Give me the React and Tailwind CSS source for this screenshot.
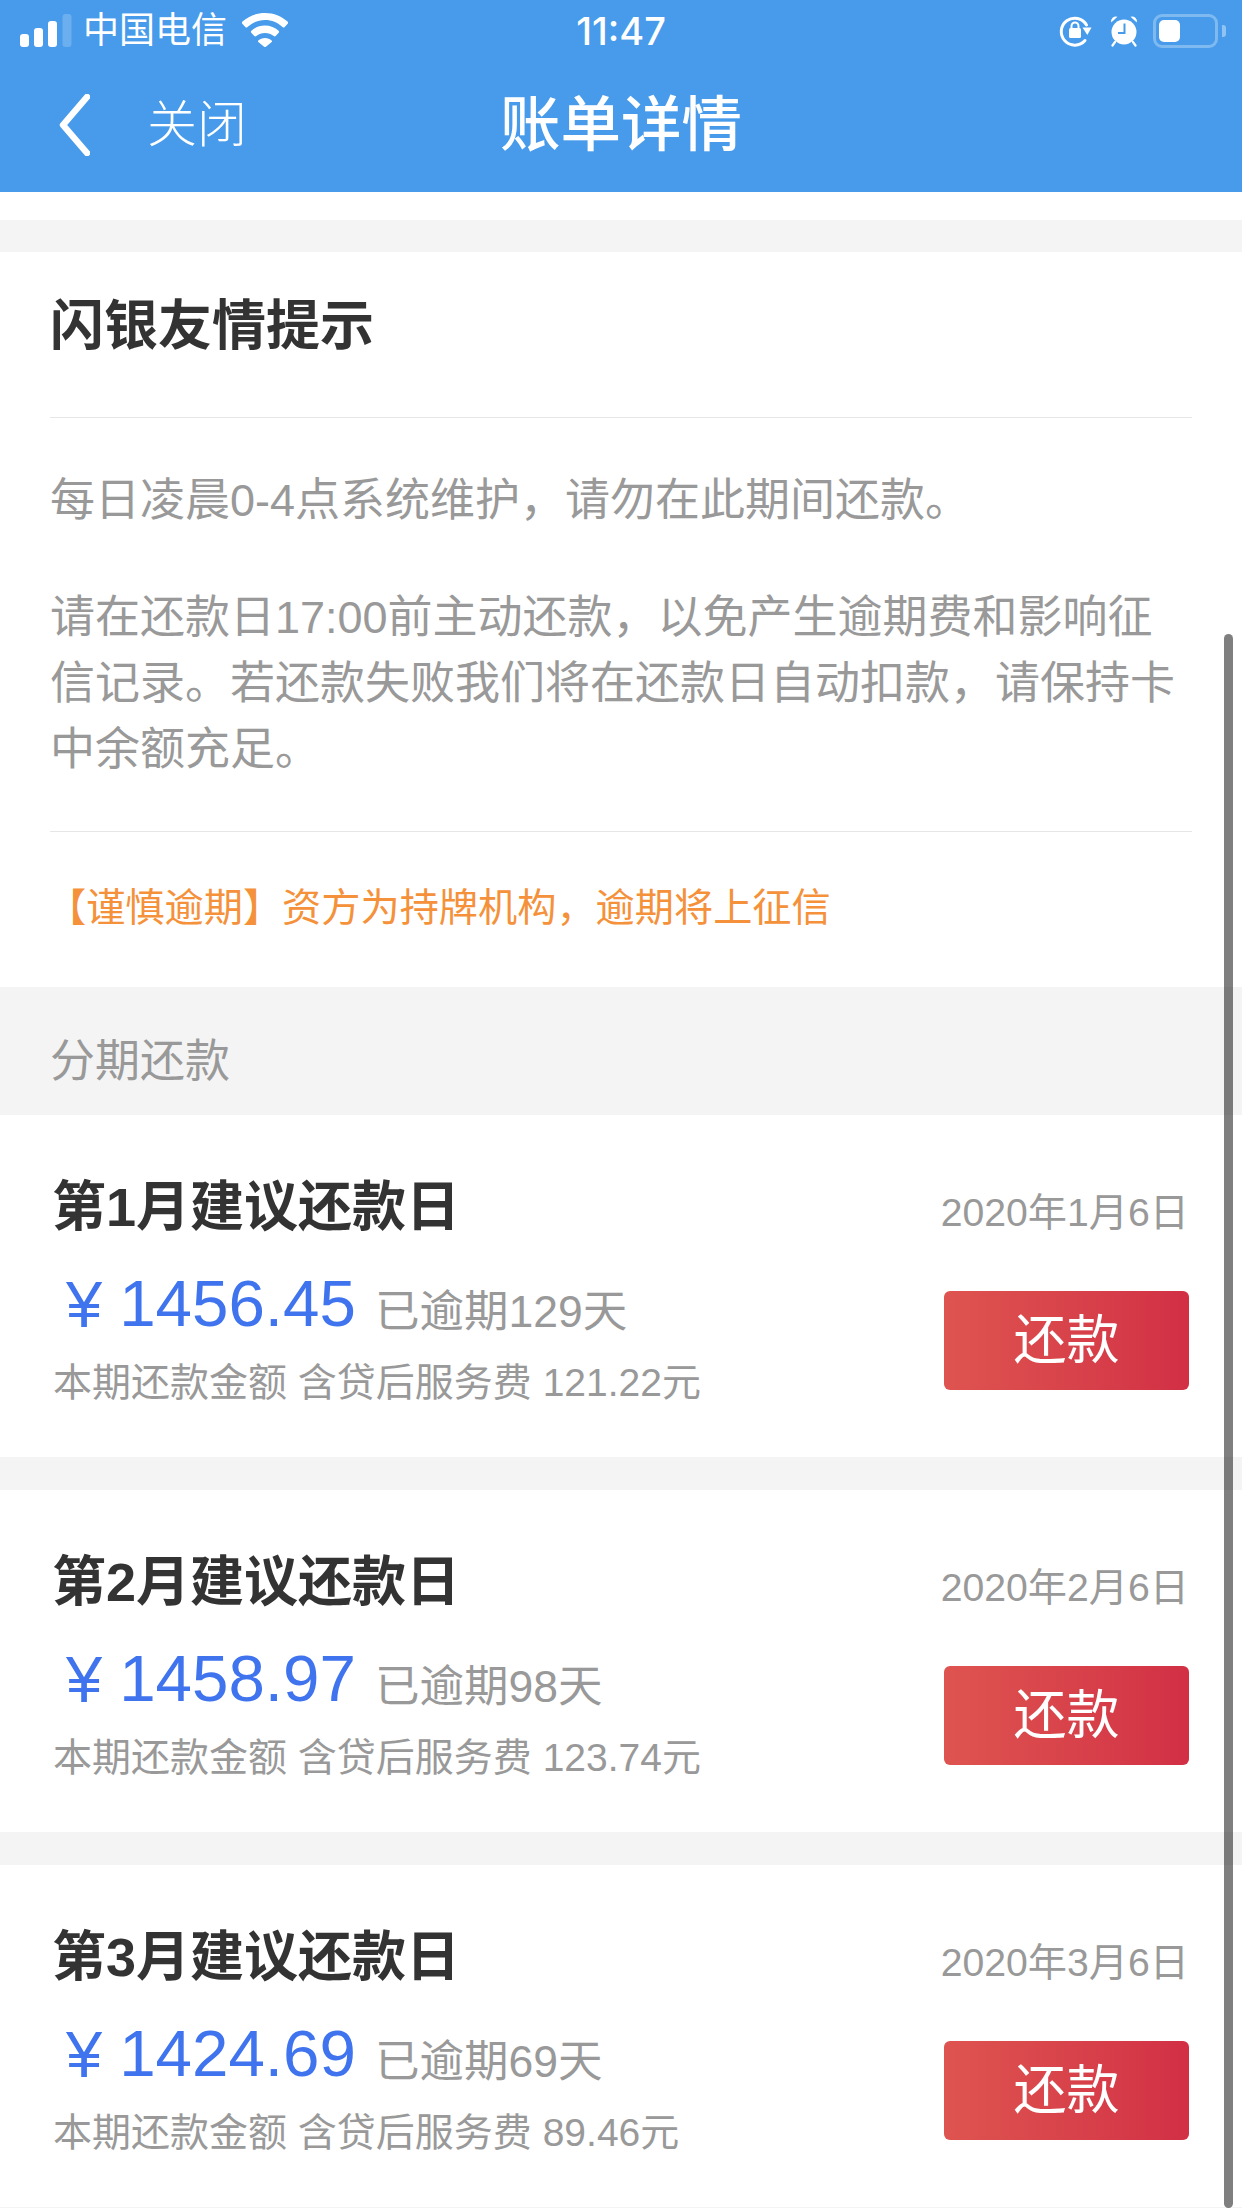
const sans = { fontFamily: '"Liberation Sans", "Noto Sans CJK SC", sans-serif' }

const bills = [
  { month: 1, date: "2020年1月6日", amount: "1456.45", overdue: 129, fee: "121.22" },
  { month: 2, date: "2020年2月6日", amount: "1458.97", overdue: 98, fee: "123.74" },
  { month: 3, date: "2020年3月6日", amount: "1424.69", overdue: 69, fee: "89.46" },
]

const SignalIcon = () => (
  <svg width="52" height="34" viewBox="0 0 52 34" fill="#fff">
    <rect x="0" y="20" width="9" height="13" rx="3" />
    <rect x="14" y="14" width="9" height="19" rx="3" />
    <rect x="28" y="7" width="9" height="26" rx="3" />
    <rect x="42.500" y="0" width="9" height="33" rx="3" opacity="0.2" />
  </svg>
)

const WifiIcon = () => (
  <svg width="46" height="34" viewBox="0 0 46 34" fill="#fff">
    <path d="M23 0C14 0 6.500 3.200 0.500 8.600c-0.800 0.700-0.800 1.500-0.200 2.200l3 3.200c0.700 0.700 1.500 0.700 2.200 0C10.300 9.600 16.300 7 23 7s12.700 2.600 17.500 7c0.700 0.700 1.500 0.700 2.200 0l3-3.200c0.600-0.700 0.600-1.500-0.200-2.200C39.500 3.200 32 0 23 0z" />
    <path d="M23 12.500c-5.300 0-10 2-13.600 5.200-0.700 0.700-0.700 1.400-0.100 2.100l3 3.200c0.600 0.600 1.300 0.700 2 0.100 2.400-2 5.400-3.200 8.700-3.200s6.300 1.200 8.700 3.200c0.700 0.600 1.400 0.500 2-0.100l3-3.200c0.600-0.700 0.600-1.400-0.100-2.100C33 14.500 28.300 12.500 23 12.500z" />
    <path d="M23 25c-2.700 0-5 1-6.700 2.500-0.500 0.500-0.500 1 0 1.500l5.500 4.600c0.700 0.600 1.700 0.600 2.400 0l5.500-4.600c0.500-0.500 0.500-1 0-1.500C28 26 25.700 25 23 25z" />
  </svg>
)

const RotationLockIcon = () => (
  <svg width="33" height="32" viewBox="0 0 33 32" fill="none">
    <path d="M26 25.500A13.500 13.500 0 1 1 27.500 10" stroke="#fff" strokeWidth="3" strokeLinecap="round" />
    <path d="M23.500 12.500h9l-4.200 7.500z" fill="#fff" />
    <rect x="10" y="13" width="12" height="10" rx="1.500" fill="#fff" />
    <path d="M12.500 13.500v-2.500a3.500 3.500 0 0 1 7 0v2.500" stroke="#fff" strokeWidth="2" />
  </svg>
)

const AlarmIcon = () => (
  <svg width="28" height="32" viewBox="0 0 28 32" fill="none">
    <circle cx="14" cy="17" r="12.500" fill="#fff" />
    <path d="M1.200 7.500A4.800 4.800 0 0 1 7.500 1.800zM26.800 7.500A4.800 4.800 0 0 0 20.500 1.800z" fill="#fff" />
    <path d="M5 27 2.500 30.500M23 27l2.500 3.500" stroke="#fff" strokeWidth="2.200" strokeLinecap="round" />
    <path d="M14.500 8.500v9.500H8" stroke="#479bea" strokeWidth="2" />
  </svg>
)

const BatteryIcon = () => (
  <div className="flex items-center gap-[4px]">
    <div className="w-[65px] h-[34px] rounded-[9px] border-[3px] border-white/30 p-[3px] flex">
      <div className="w-[21px] h-full rounded-[5px] bg-white" />
    </div>
    <div className="w-[4px] h-[12px] rounded-r-[3px] bg-white/40" />
  </div>
)

const StatusBar = () => (
  <div className="grid grid-cols-[1fr_auto_1fr] items-center h-[60px] px-[20px] pt-[2px] text-white">
    <div className="flex items-center">
      <SignalIcon />
      <span className="ml-[11px] text-[36px] leading-none">中国电信</span>
      <span className="ml-[15px] -mt-[2px]"><WifiIcon /></span>
    </div>
    <span className="text-[38px] leading-none font-medium" style={{ fontFamily: '"Inter", sans-serif' }}>11:47</span>
    <div className="flex items-center justify-end -mr-[4px]">
      <RotationLockIcon />
      <span className="ml-[18px]"><AlarmIcon /></span>
      <span className="ml-[15px]"><BatteryIcon /></span>
    </div>
  </div>
)

const NavBar = () => (
  <div className="grid grid-cols-[1fr_auto_1fr] items-center h-[132px] px-[58px] pb-[2px] text-white">
    <div className="flex items-center">
      <svg width="32" height="62" viewBox="0 0 32 62" fill="none">
        <path d="M29 3 5 31l24 28" stroke="#fff" strokeWidth="6.500" strokeLinecap="round" strokeLinejoin="round" />
      </svg>
      <span className="ml-[57px] text-[50px] leading-none font-light">关闭</span>
    </div>
    <span className="text-[60.500px] leading-none font-medium">账单详情</span>
    <div />
  </div>
)

const BillCard = ({ bill }) => (
  <div className="flex justify-between h-[342px] pl-[52px] pr-[53px] bg-white">
    <div className="pt-[62px]">
      <div className="h-[60px] flex items-center text-[54px] font-bold text-[#333]">
        第{bill.month}月建议还款日
      </div>
      <div className="h-[74px] flex items-center mt-[30px] ml-[14px]">
        <span className="text-[65px] text-[#3f74ee] leading-none">¥</span>
        <span className="ml-[17px] text-[65.500px] text-[#3f74ee] leading-none">{bill.amount}</span>
        <span className="ml-[19px] mt-[17px] text-[44.500px] text-[#999] leading-none">已逾期{bill.overdue}天</span>
      </div>
      <div className="h-[50px] flex items-center mt-[17px] ml-[1px] text-[39px] text-[#999] whitespace-pre">
        本期还款金额 含贷后服务费 {bill.fee}元
      </div>
    </div>
    <div className="pt-[73px] flex flex-col items-end">
      <div className="h-[50px] flex items-center text-[39.200px] text-[#999]">{bill.date}</div>
      <button className="mt-[53px] w-[245px] h-[99px] rounded-[6px] bg-gradient-to-r from-[#de5450] to-[#d22f45] text-white text-[53px] leading-none">
        还款
      </button>
    </div>
  </div>
)

const App = () => {
  return (
    <div className="relative w-[1242px] h-[2208px] overflow-hidden bg-[#f4f4f4]" style={sans}>
      <div className="bg-[#479bea]">
        <StatusBar />
        <NavBar />
      </div>
      <div className="h-[28px] bg-white" />
      <div className="h-[32px]" />

      <div className="h-[735px] bg-white px-[50px]">
        <div className="h-[166px] border-b border-[#e6e6e6] pt-[43px] text-[54px] leading-[62px] font-bold text-[#333]">
          闪银友情提示
        </div>
        <div className="h-[414px] border-b border-[#e6e6e6] pt-[50px] text-[45px] leading-[66px] text-[#999]">
          <p>每日凌晨0-4点系统维护，请勿在此期间还款。</p>
          <p className="mt-[51px]">请在还款日17:00前主动还款，以免产生逾期费和影响征信记录。若还款失败我们将在还款日自动扣款，请保持卡中余额充足。</p>
        </div>
        <div className="pt-[51px] text-[39.200px] leading-[50px] text-[#f4913a] -ml-[3px]">
          【谨慎逾期】资方为持牌机构，逾期将上征信
        </div>
      </div>

      <div className="h-[128px] flex items-center px-[50px] pt-[22px] text-[45px] text-[#999]">分期还款</div>

      <div className="flex flex-col gap-[33px]">
        {bills.map((bill) => (
          <BillCard key={bill.month} bill={bill} />
        ))}
      </div>

      {/* overlay scroll indicator */}
      <div className="absolute right-[9px] top-[634px] bottom-0 w-[9px] rounded-full bg-black/50" />
    </div>
  )
}

export default App
